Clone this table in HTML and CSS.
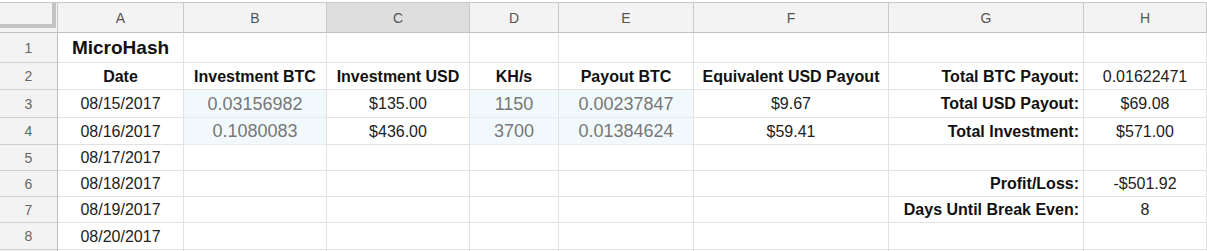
FILE: index.html
```html
<!DOCTYPE html>
<html>
<head>
<meta charset="utf-8">
<link rel="stylesheet" href="styles.css">
</head>
<body>
<div class="sheet">
  <div class="ch corner"><div class="freeze"></div></div>
  <div class="ch">A</div>
  <div class="ch">B</div>
  <div class="ch sel">C</div>
  <div class="ch">D</div>
  <div class="ch">E</div>
  <div class="ch">F</div>
  <div class="ch">G</div>
  <div class="ch">H</div>

  <div class="rh">1</div>
  <div class="c title">MicroHash</div>
  <div class="c"></div><div class="c"></div><div class="c"></div><div class="c"></div><div class="c"></div><div class="c"></div><div class="c"></div>

  <div class="rh">2</div>
  <div class="c b">Date</div>
  <div class="c b">Investment BTC</div>
  <div class="c b">Investment USD</div>
  <div class="c b">KH/s</div>
  <div class="c b">Payout BTC</div>
  <div class="c b">Equivalent USD Payout</div>
  <div class="c b r">Total BTC Payout:</div>
  <div class="c">0.01622471</div>

  <div class="rh">3</div>
  <div class="c">08/15/2017</div>
  <div class="c in">0.03156982</div>
  <div class="c">$135.00</div>
  <div class="c in">1150</div>
  <div class="c in">0.00237847</div>
  <div class="c">$9.67</div>
  <div class="c b r">Total USD Payout:</div>
  <div class="c">$69.08</div>

  <div class="rh">4</div>
  <div class="c">08/16/2017</div>
  <div class="c in">0.1080083</div>
  <div class="c">$436.00</div>
  <div class="c in">3700</div>
  <div class="c in">0.01384624</div>
  <div class="c">$59.41</div>
  <div class="c b r">Total Investment:</div>
  <div class="c">$571.00</div>

  <div class="rh">5</div>
  <div class="c">08/17/2017</div>
  <div class="c"></div><div class="c"></div><div class="c"></div><div class="c"></div><div class="c"></div><div class="c"></div><div class="c"></div>

  <div class="rh">6</div>
  <div class="c">08/18/2017</div>
  <div class="c"></div><div class="c"></div><div class="c"></div><div class="c"></div><div class="c"></div>
  <div class="c b r">Profit/Loss:</div>
  <div class="c">-$501.92</div>

  <div class="rh">7</div>
  <div class="c">08/19/2017</div>
  <div class="c"></div><div class="c"></div><div class="c"></div><div class="c"></div><div class="c"></div>
  <div class="c b r">Days Until Break Even:</div>
  <div class="c">8</div>

  <div class="rh">8</div>
  <div class="c">08/20/2017</div>
  <div class="c"></div><div class="c"></div><div class="c"></div><div class="c"></div><div class="c"></div><div class="c"></div><div class="c"></div>

  <div class="rh"></div>
  <div class="c"></div><div class="c"></div><div class="c"></div><div class="c"></div><div class="c"></div><div class="c"></div><div class="c"></div><div class="c"></div>
</div>
</body>
</html>
```

FILE: styles.css
```css
html, body {
  margin: 0;
  padding: 0;
  background: #ffffff;
  overflow: hidden;
}

.sheet {
  padding-top: 2px;
  display: grid;
  grid-template-columns: 58px 126px 143px 143px 89px 135px 195px 195px 123px;
  grid-template-rows: 31px 30px 27px 28px 27px 26px 26px 26px 27px 26px;
  font-family: "Liberation Sans", Arial, sans-serif;
}

.sheet > div {
  box-sizing: border-box;
  display: flex;
  align-items: center;
  justify-content: center;
  white-space: nowrap;
  overflow: hidden;
}

.ch {
  background: #f3f3f3;
  border-top: 1px solid #c9c9c9;
  border-right: 1px solid #c9c9c9;
  border-bottom: 1px solid #c0c0c0;
  font-size: 14px;
  color: #555555;
  padding-top: 1px;
}

.ch.sel {
  background: #dedede;
}

.ch.corner {
  align-items: flex-start;
  justify-content: flex-start;
  padding-top: 0;
}

.freeze {
  width: 52px;
  height: 21px;
  border-right: 4px solid #c4c4c4;
  border-bottom: 4px solid #c4c4c4;
}

.rh {
  background: #f3f3f3;
  border-right: 1px solid #c0c0c0;
  border-bottom: 1px solid #cfcfcf;
  font-size: 14px;
  color: #666666;
}

.c {
  border-right: 1px solid #e2e2e2;
  border-bottom: 1px solid #e2e2e2;
  font-size: 16px;
  color: #222222;
  padding-top: 1px;
}

.title {
  font-size: 19px;
  font-weight: bold;
  color: #111111;
}

.b {
  font-weight: bold;
  color: #111111;
}

.sheet > .r {
  justify-content: flex-end;
  padding-right: 4px;
}

.in {
  background: #f2f9fc;
  color: #777777;
  font-size: 18px;
  border-bottom-color: #e4edf1;
}
```
